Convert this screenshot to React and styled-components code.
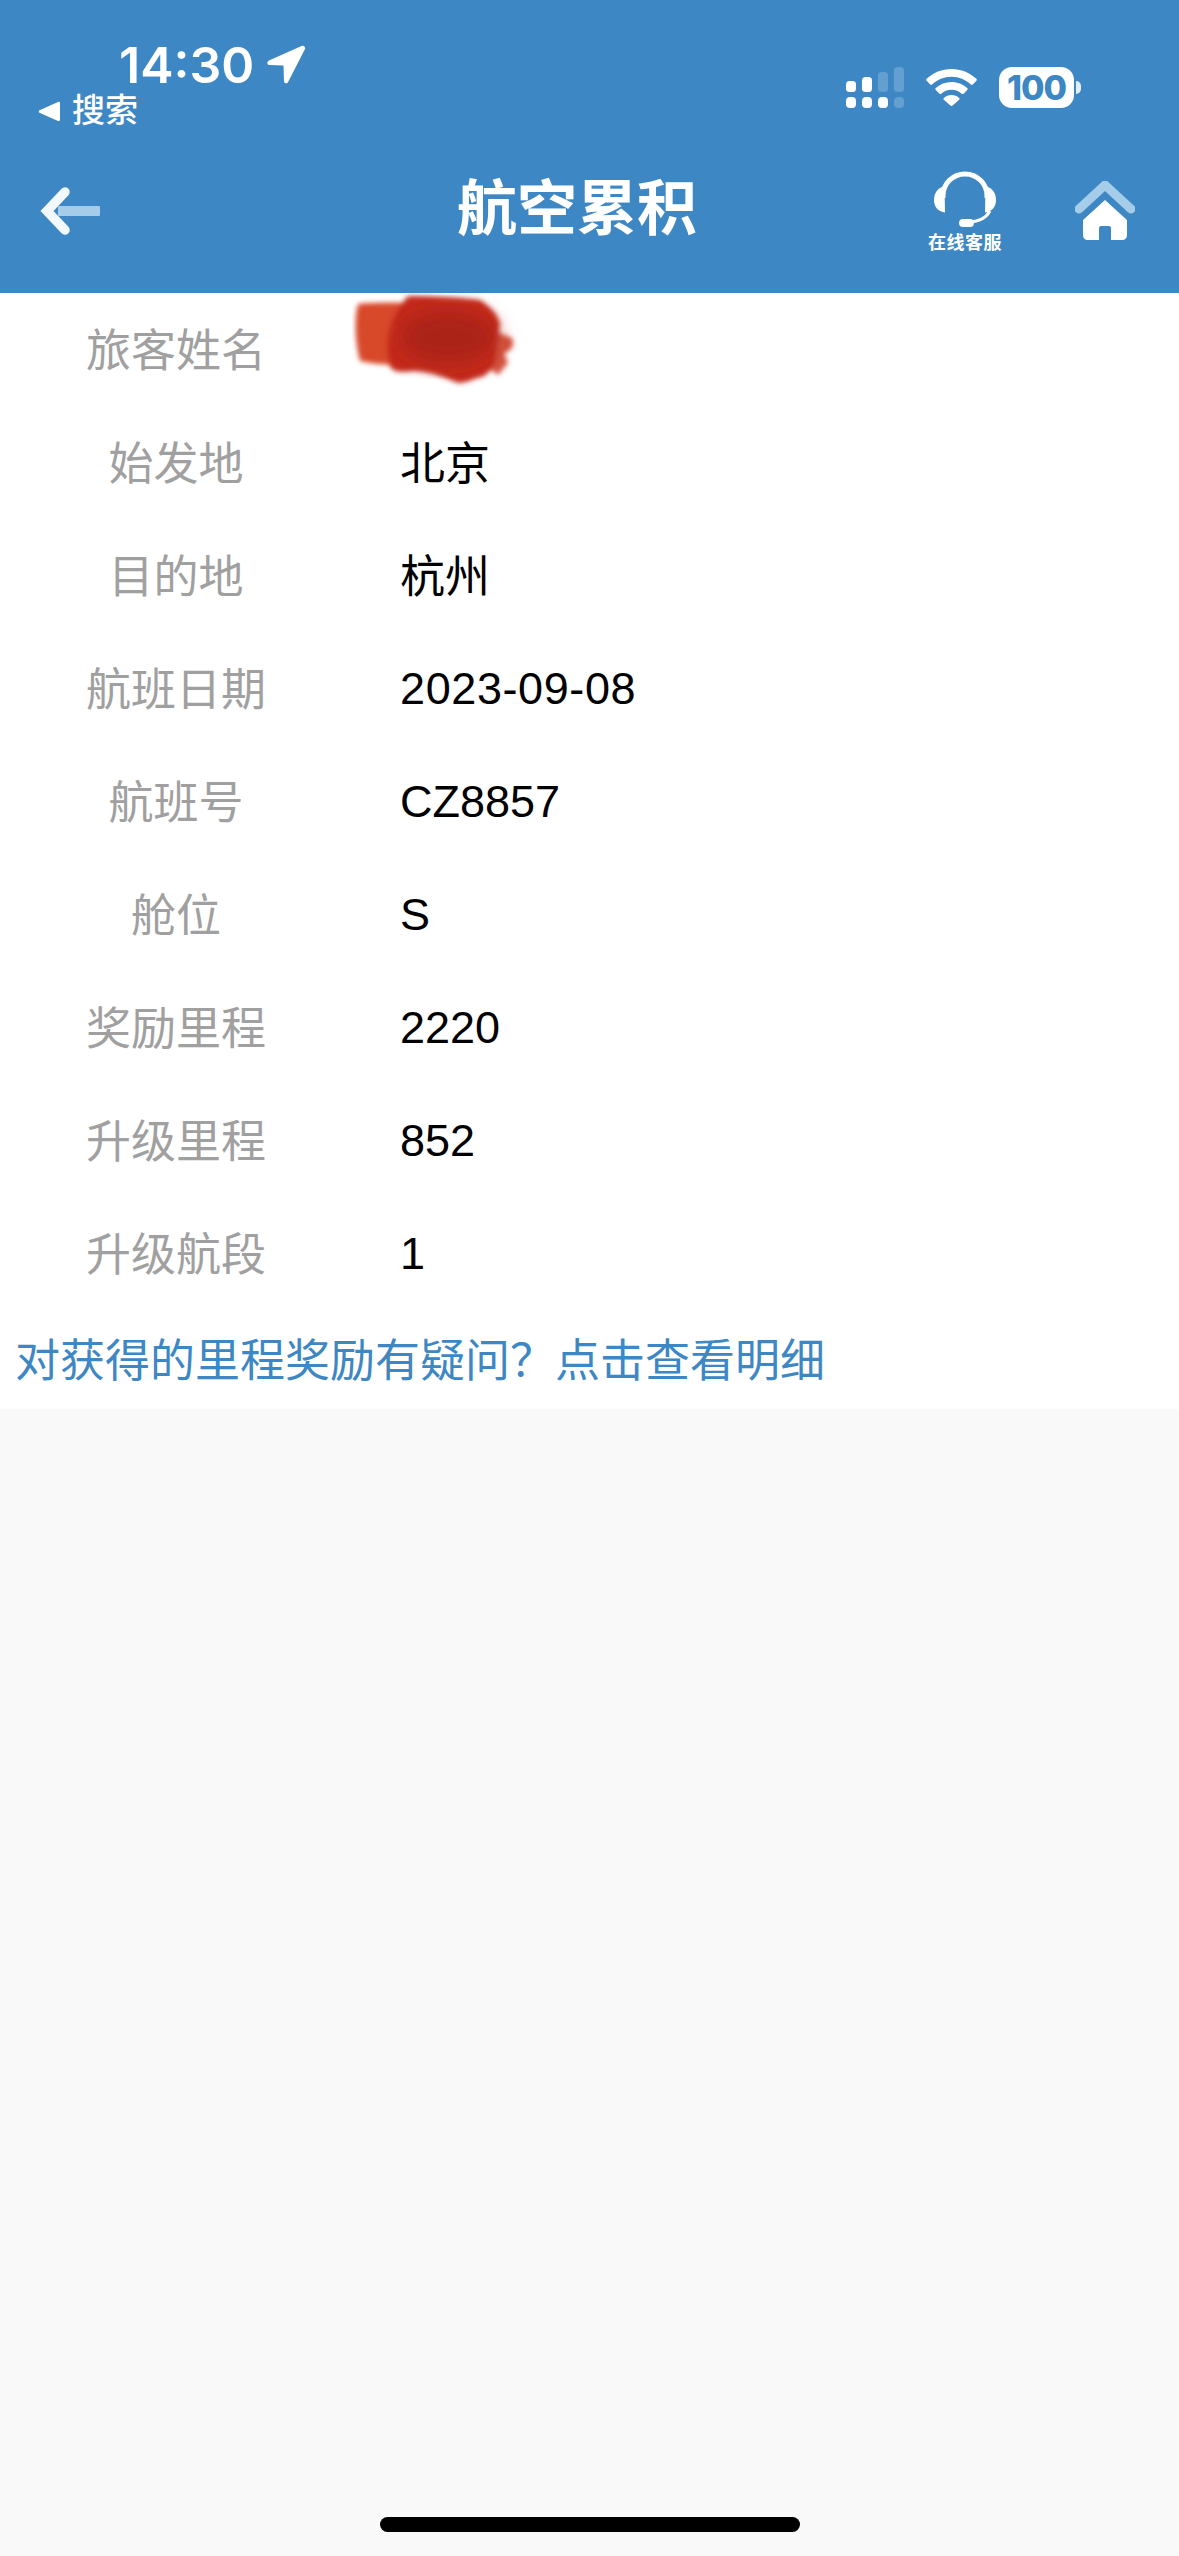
import React from "react";
import styled, { createGlobalStyle } from "styled-components";

const BLUE = "#3d87c4";
const FONT = `"Liberation Sans", "Noto Sans CJK SC", sans-serif`;

const GlobalStyle = createGlobalStyle`
  html, body {
    margin: 0;
    padding: 0;
    background: #f9f9f9;
  }
  body {
    font-family: ${FONT};
  }
`;

const Page = styled.div`
  width: 1179px;
  height: 2556px;
  display: flex;
  flex-direction: column;
  background: #f9f9f9;
  overflow: hidden;
`;

const Header = styled.header`
  height: 293px;
  flex: none;
  display: flex;
  flex-direction: column;
  background: ${BLUE};
  color: #fff;
`;

const StatusBar = styled.div`
  height: 132px;
  display: flex;
  justify-content: space-between;
  align-items: flex-start;
  padding: 38px 98px 0 38px;
  box-sizing: border-box;
`;

const StatusLeft = styled.div`
  display: flex;
  flex-direction: column;
`;

const TimeRow = styled.div`
  height: 54px;
  display: flex;
  align-items: center;
  gap: 12px;
  padding-left: 81px;
`;

const Time = styled.span`
  font-family: Inter, sans-serif;
  font-size: 50px;
  font-weight: 600;
  line-height: 54px;
`;

const BackToApp = styled.div`
  display: flex;
  align-items: center;
  gap: 12px;
  height: 34px;
  margin-top: 2px;
  font-size: 33px;
  font-weight: 500;
  line-height: 34px;
`;

const StatusRight = styled.div`
  display: flex;
  align-items: center;
  gap: 22px;
  margin-top: 29px;
`;

const Battery = styled.div`
  display: flex;
  align-items: center;
  gap: 2px;
`;

const BatteryBody = styled.div`
  width: 75px;
  height: 41px;
  border-radius: 13px;
  background: #fff;
  color: ${BLUE};
  font-family: Inter, sans-serif;
  font-size: 34px;
  font-weight: 800;
  line-height: 41px;
  text-align: center;
  letter-spacing: -1px;
`;

const BatteryTip = styled.div`
  width: 5px;
  height: 13px;
  border-radius: 0 6px 6px 0;
  background: rgba(255, 255, 255, 0.85);
`;

const NavBar = styled.nav`
  position: relative;
  flex: 1;
  display: flex;
  align-items: flex-start;
  justify-content: space-between;
  padding: 54px 44px 0 40px;
`;

const Title = styled.h1`
  position: absolute;
  left: 0;
  right: 25px;
  top: 43px;
  margin: 0;
  font-size: 60px;
  font-weight: 700;
  line-height: 70px;
  text-align: center;
`;

const NavRight = styled.div`
  display: flex;
  align-items: flex-start;
  gap: 73px;
  margin-top: -15px;
`;

const Service = styled.div`
  display: flex;
  flex-direction: column;
  align-items: center;
  gap: 6px;
`;

const ServiceLabel = styled.span`
  font-size: 18px;
  font-weight: 700;
  line-height: 20px;
  letter-spacing: 0.5px;
  white-space: nowrap;
`;

const HomeSlot = styled.div`
  margin-top: 10px;
`;

const Content = styled.main`
  flex: none;
  height: 1116px;
  background: #fff;
  display: flex;
  flex-direction: column;
`;

const Row = styled.div`
  height: 113px;
  display: flex;
  align-items: center;
`;

const Label = styled.div`
  width: 352px;
  flex: none;
  padding-bottom: 5px;
  text-align: center;
  color: #a0a0a0;
  font-size: 45px;
`;

const Value = styled.div`
  position: relative;
  padding-left: 48px;
  padding-bottom: ${(p) => (p.$cjk ? "5px" : "0")};
  color: #000;
  font-size: 45px;
  letter-spacing: ${(p) => (p.$tracked ? "0.6px" : "0")};
`;

const Redaction = styled.svg`
  position: absolute;
  left: 0;
  top: -57px;
`;

const DetailLink = styled.a`
  height: 99px;
  box-sizing: border-box;
  padding: 0 0 4px 15px;
  display: flex;
  align-items: center;
  color: ${BLUE};
  font-size: 45px;
  text-decoration: none;
`;

const HomeBar = styled.div`
  width: 420px;
  height: 15px;
  border-radius: 8px;
  margin: auto auto 24px;
  background: #000;
`;

const rows = [
  { label: "旅客姓名", redacted: true },
  { label: "始发地", value: "北京", cjk: true },
  { label: "目的地", value: "杭州", cjk: true },
  { label: "航班日期", value: "2023-09-08", tracked: true },
  { label: "航班号", value: "CZ8857" },
  { label: "舱位", value: "S" },
  { label: "奖励里程", value: "2220" },
  { label: "升级里程", value: "852" },
  { label: "升级航段", value: "1" },
];

const LocationIcon = () => (
  <svg width="40" height="40" viewBox="0 0 40 40">
    <path
      d="M35.500 1 3 15.500C.5 16.700 1 20 3.600 20.100l13.900.5.500 15.400c.1 2.500 3.100 3.200 4.100.9L39 4c.8-2-1.600-3.900-3.500-3Z"
      fill="#fff"
    />
  </svg>
);

const BackTriangle = () => (
  <svg width="22" height="21" viewBox="0 0 22 21">
    <path d="M20 1 1.500 9.200c-1 .6-1 2 0 2.600L20 20c1 .4 2-.2 2-1.200V2.200C22 1.200 21 .6 20 1Z" fill="#fff" />
  </svg>
);

const SignalIcon = () => (
  <svg width="58" height="41" viewBox="0 0 58 41" fill="#fff">
    <rect x="0" y="14" width="10" height="11" rx="3.500" />
    <rect x="16" y="10" width="10" height="15" rx="3.500" />
    <rect x="32" y="5" width="10" height="20" rx="3.500" opacity="0.2" />
    <rect x="48" y="0" width="10" height="25" rx="3.500" opacity="0.2" />
    <rect x="0" y="30" width="10" height="11" rx="4" />
    <rect x="16" y="30" width="10" height="11" rx="4" />
    <rect x="32" y="30" width="10" height="11" rx="4" />
    <rect x="48" y="30" width="10" height="11" rx="4" opacity="0.2" />
  </svg>
);

const WifiIcon = () => (
  <svg width="51" height="37" viewBox="0 0 51 37" fill="#fff">
    <path d="M25.500 0C16 0 7.200 3.700.6 9.800c-.6.6-.6 1.300 0 1.900l3.600 3.700c.5.5 1.300.5 1.900 0C11.300 10.600 18 7.700 25.500 7.700s14.200 2.900 19.400 7.700c.6.5 1.400.5 1.900 0l3.600-3.700c.6-.6.6-1.300 0-1.900C43.800 3.700 35 0 25.500 0Z" />
    <path d="M25.500 13c-6 0-11.500 2.300-15.700 6.100-.6.6-.6 1.300 0 1.900l3.600 3.700c.5.5 1.300.5 1.900 0 2.700-2.400 6.300-3.900 10.200-3.900s7.500 1.500 10.200 3.900c.6.5 1.400.5 1.900 0l3.600-3.700c.6-.6.6-1.300 0-1.900C37 15.300 31.500 13 25.500 13Z" />
    <path d="M25.500 26c-3 0-5.700 1.100-7.700 3-.5.5-.5 1.200 0 1.700l6.600 5.800c.6.6 1.600.6 2.200 0l6.600-5.800c.5-.5.5-1.200 0-1.700-2-1.900-4.700-3-7.700-3Z" />
  </svg>
);

const BackArrow = () => (
  <svg width="60" height="50" viewBox="0 0 60 50">
    <path d="M25 6 7 25l18 19" fill="none" stroke="#f3f8fd" strokeWidth="9.500" strokeLinecap="round" strokeLinejoin="miter" />
    <rect x="18" y="20" width="42" height="10" rx="1" fill="#a5cdea" />
  </svg>
);

const HeadsetIcon = () => (
  <svg width="62" height="56" viewBox="0 0 62 56">
    <path d="M9 27V25C9 12.500 18.800 3 31 3s22 9.500 22 22v2" fill="none" stroke="#fff" strokeWidth="5" />
    <path d="M10.500 15C3.500 17 0 22 0 29s4 11.500 11 12.500Z" fill="#fff" />
    <path d="M51.500 15C58.500 17 62 22 62 29s-4 11.500-11 12.500Z" fill="#fff" />
    <path d="M56 40C52 47 46 51 34 51" fill="none" stroke="#fff" strokeWidth="3" />
    <rect x="25" y="48" width="15" height="8" rx="4" fill="#fff" />
  </svg>
);

const HomeIcon = () => (
  <svg width="60" height="60" viewBox="0 0 60 60">
    <path d="M4 28 30 4l26 24" fill="none" stroke="#a5cdea" strokeWidth="9" strokeLinecap="round" strokeLinejoin="round" />
    <path
      d="M30 19 8 39v15c0 3 2 5 5 5h11V47c0-1 1-2 2-2h8c1 0 2 1 2 2v12h11c3 0 5-2 5-5V39Z"
      fill="#fff"
    />
  </svg>
);

const RedactionBlot = () => (
  <Redaction width="180" height="100" viewBox="0 0 180 100">
    <defs>
      <filter id="soft" x="-10%" y="-10%" width="120%" height="120%">
        <feGaussianBlur stdDeviation="2.500" />
      </filter>
      <filter id="softer" x="-30%" y="-30%" width="160%" height="160%">
        <feGaussianBlur stdDeviation="10" />
      </filter>
    </defs>
    <g filter="url(#soft)">
      <path d="M6 11 C30 9 55 10 70 11 L70 70 C50 73 25 72 8 68 C3 50 2 25 6 11Z" fill="#d8492a" />
      <path d="M142 38 L160 45 C163 52 160 58 152 60 L156 70 L146 82 L130 70Z" fill="#d3553f" />
      <path
        d="M56 3 C80 3 110 5 128 7 C138 14 146 20 148 32 L144 50 C146 65 142 78 130 84 C122 85 116 90 106 90 C93 85 80 78 60 78 C48 80 38 79 37 70 C34 55 36 40 42 25 C46 15 50 10 56 3Z"
        fill="#c42c1a"
      />
    </g>
    <ellipse cx="96" cy="44" rx="48" ry="26" fill="#aa2013" filter="url(#softer)" />
  </Redaction>
);

export default function App() {
  return (
    <>
      <GlobalStyle />
      <Page>
        <Header>
          <StatusBar>
            <StatusLeft>
              <TimeRow>
                <Time>14:30</Time>
                <LocationIcon />
              </TimeRow>
              <BackToApp>
                <BackTriangle />
                搜索
              </BackToApp>
            </StatusLeft>
            <StatusRight>
              <SignalIcon />
              <WifiIcon />
              <Battery>
                <BatteryBody>100</BatteryBody>
                <BatteryTip />
              </Battery>
            </StatusRight>
          </StatusBar>
          <NavBar>
            <BackArrow />
            <Title>航空累积</Title>
            <NavRight>
              <Service>
                <HeadsetIcon />
                <ServiceLabel>在线客服</ServiceLabel>
              </Service>
              <HomeSlot>
                <HomeIcon />
              </HomeSlot>
            </NavRight>
          </NavBar>
        </Header>
        <Content>
          {rows.map((row) => (
            <Row key={row.label}>
              <Label>{row.label}</Label>
              <Value $cjk={row.cjk} $tracked={row.tracked}>
                {row.redacted ? <RedactionBlot /> : row.value}
              </Value>
            </Row>
          ))}
          <DetailLink href="#">{"对获得的里程奖励有疑问\uFF1F点击查看明细"}</DetailLink>
        </Content>
        <HomeBar />
      </Page>
    </>
  );
}
